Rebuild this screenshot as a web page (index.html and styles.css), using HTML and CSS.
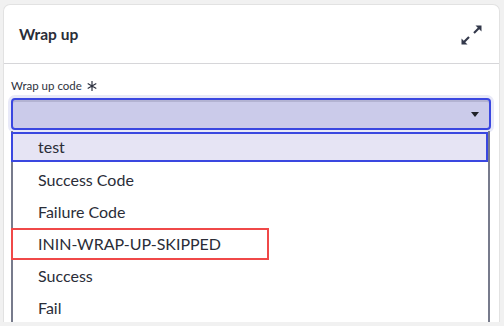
FILE: index.html
```html
<!DOCTYPE html>
<html>
<head>
<meta charset="utf-8">
<link rel="stylesheet" href="styles.css">
</head>
<body>
<div class="card">
  <div class="header">
    <h2 class="title">Wrap up</h2>
    <svg class="expand" width="21" height="20" viewBox="0 0 21 20">
      <path d="M14.5 0.5 L20.5 0.5 L20.5 6.5 Z" fill="#33384a"/>
      <path d="M18 3 L13 8" fill="none" stroke="#33384a" stroke-width="2.2"/>
      <path d="M0.5 13.5 L0.5 19.5 L6.5 19.5 Z" fill="#33384a"/>
      <path d="M3 17 L8 12" fill="none" stroke="#33384a" stroke-width="2.2"/>
    </svg>
  </div>
  <div class="body">
    <div class="label">Wrap up code
      <svg class="req" width="10" height="10" viewBox="0 0 10 10">
        <path d="M5 0 L5 10 M0.7 2.5 L9.3 7.5 M0.7 7.5 L9.3 2.5" stroke="#2e3240" stroke-width="1.2" fill="none"/>
      </svg>
    </div>
    <div class="select"><span class="caret"></span></div>
    <ul class="list">
      <li class="item active">test</li>
      <li class="item">Success Code</li>
      <li class="item">Failure Code</li>
      <li class="item marked">ININ-WRAP-UP-SKIPPED</li>
      <li class="item">Success</li>
      <li class="item">Fail</li>
    </ul>
  </div>
</div>
</body>
</html>
```
FILE: styles.css
```css
html, body {
  margin: 0;
  padding: 0;
}
body {
  background: #f1f1f1;
  font-family: Lato, "Noto Sans", sans-serif;
  color: #2b2f3b;
  width: 504px;
  height: 326px;
  overflow: hidden;
}
.card {
  margin: 4px 4px 0 3px;
  height: 318px;
  background: #ffffff;
  border: 1px solid #e2e2e2;
  border-bottom: none;
  border-radius: 7px 7px 0 0;
  box-sizing: border-box;
  overflow: hidden;
}
.header {
  height: 58px;
  border-bottom: 1px solid #d6d6d9;
  display: flex;
  align-items: center;
  justify-content: space-between;
  padding: 0 17px 0 15px;
}
.title {
  margin: 0;
  font-size: 15.5px;
  font-weight: 700;
  color: #2a2d38;
}
.expand {
  display: block;
  margin-top: 1px;
}
.body {
  padding: 15px 8px 0 7px;
}
.label {
  font-size: 11.5px;
  line-height: 14px;
  color: #2e3240;
  margin-bottom: 5px;
  display: flex;
  align-items: center;
}
.req {
  display: block;
  margin-left: 5px;
}
.select {
  height: 32px;
  box-sizing: border-box;
  border: 2px solid #3a47e0;
  border-radius: 4px;
  background: #cbcbea;
  box-shadow: 0 0 0 3px #e8e9f8, inset 0 2px 0 #b3b3d2;
  display: flex;
  align-items: center;
  justify-content: flex-end;
  padding-right: 10px;
}
.caret {
  width: 0;
  height: 0;
  border-left: 4px solid transparent;
  border-right: 4px solid transparent;
  border-top: 5px solid #1f2128;
  margin-top: 1px;
}
.list {
  list-style: none;
  margin: 1px 1px 0 0;
  padding: 1px 0 0 0;
  border-left: 2px solid #777b8c;
  border-right: 2px solid #777b8c;
  height: 200px;
  box-sizing: border-box;
}
.item {
  height: 32px;
  line-height: 32px;
  font-size: 16px;
  padding-left: 25px;
  color: #2a2d38;
  position: relative;
}
.item.active {
  height: 30px;
  line-height: 26px;
  margin: 0 0 2px -2px;
  padding-left: 25px;
  background: #e6e4f4;
  border: 2px solid #3a47e0;
  box-sizing: border-box;
  width: calc(100% + 2px);
}
.item.marked::after {
  content: "";
  position: absolute;
  left: -2px;
  top: 0;
  width: 258px;
  height: 32px;
  box-sizing: border-box;
  border: 2px solid #f04848;
}
```
